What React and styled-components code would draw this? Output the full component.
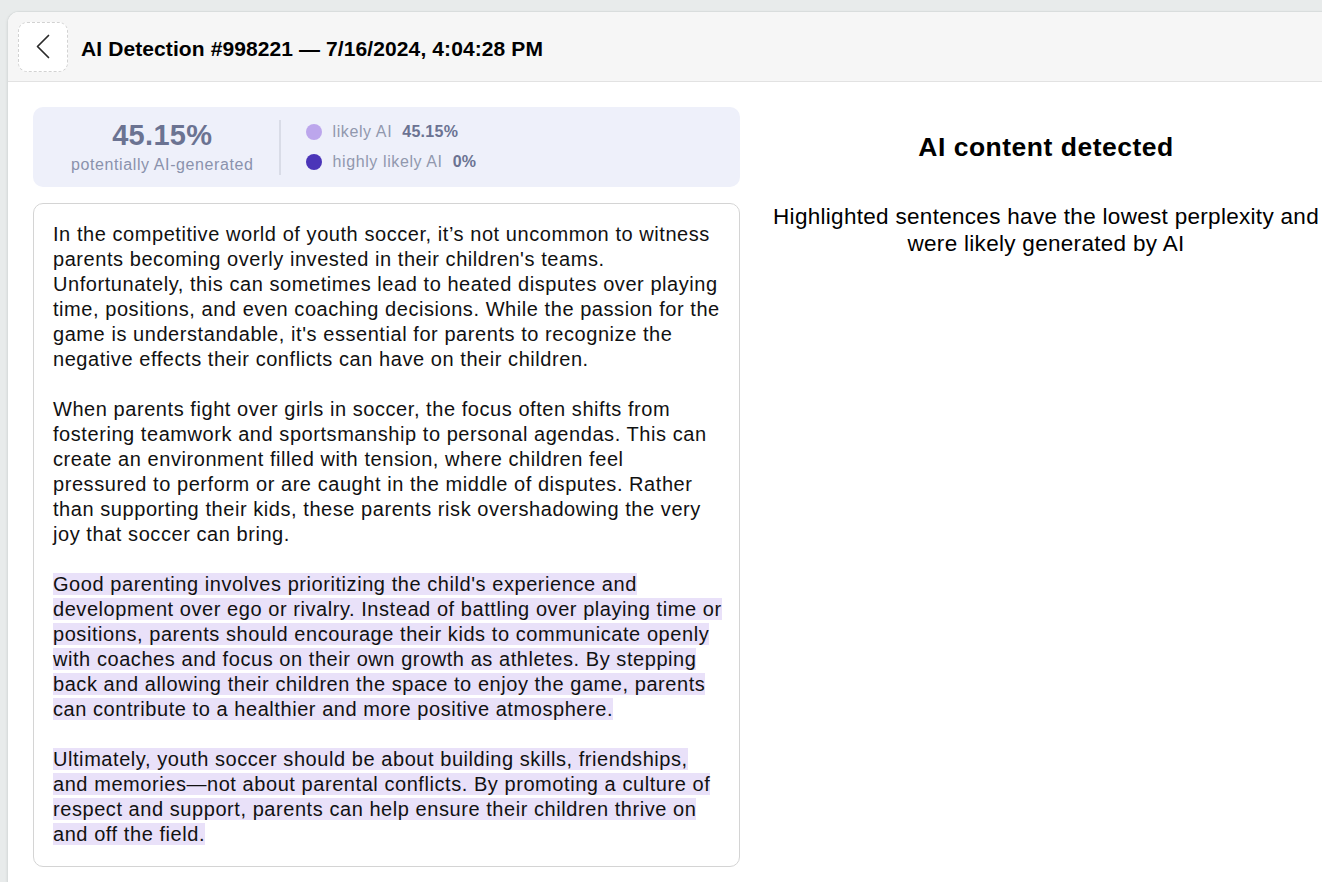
import React from "react";
import styled, { createGlobalStyle } from "styled-components";

const GlobalStyle = createGlobalStyle`
  html, body {
    margin: 0;
    padding: 0;
    background: #e8ebeb;
    font-family: "Liberation Sans", Arial, sans-serif;
    overflow: hidden;
  }
`;

export const Window = styled.div`
  width: 1352px;
  min-height: 871px;
  margin: 11px 0 0 7px;
  background: #fff;
  border: 1px solid #d9dddd;
  border-right: none;
  border-bottom: none;
  border-radius: 12px 0 0 0;
  box-shadow: 0 1px 3px rgba(0, 0, 0, 0.08);
  overflow: hidden;
`;

export const Header = styled.header`
  display: flex;
  align-items: center;
  gap: 13px;
  height: 70px;
  box-sizing: border-box;
  padding: 0 10px;
  background: #f6f6f6;
  border-bottom: 1px solid #e2e2e2;
`;

export const BackButton = styled.button`
  width: 50px;
  height: 50px;
  display: flex;
  align-items: center;
  justify-content: center;
  background: #fff;
  border: 1px dashed #d2d2d2;
  border-radius: 9px;
  padding: 0;
  cursor: pointer;
`;

export const Title = styled.h1`
  margin: 0;
  padding-top: 5px;
  font-size: 21px;
  letter-spacing: 0.1px;
  font-weight: 700;
  color: #000;
`;

export const Content = styled.main`
  display: grid;
  grid-template-columns: 707px 578px;
  column-gap: 17px;
  align-items: start;
  padding: 25px 25px 0 25px;
`;

export const LeftColumn = styled.section`
  display: flex;
  flex-direction: column;
  gap: 16px;
`;

export const StatsCard = styled.div`
  display: flex;
  align-items: center;
  height: 80px;
  padding: 0 25px 0 38px;
  background: #eef0fa;
  border-radius: 10px;
`;

export const Score = styled.div`
  display: flex;
  flex-direction: column;
  align-items: center;
`;

export const ScoreValue = styled.div`
  font-size: 29px;
  line-height: 32px;
  font-weight: 700;
  letter-spacing: 0.3px;
  color: #6b7392;
`;

export const ScoreLabel = styled.div`
  margin-top: 4px;
  font-size: 16px;
  line-height: 20px;
  letter-spacing: 0.6px;
  color: #8a92ac;
`;

export const Divider = styled.div`
  width: 2px;
  height: 55px;
  margin: 0 25px;
  background: #d9dce7;
`;

export const Legend = styled.div`
  display: flex;
  flex-direction: column;
  gap: 10px;
`;

export const LegendRow = styled.div`
  display: flex;
  align-items: center;
  height: 20px;
  font-size: 16px;
  line-height: 20px;
  letter-spacing: 0.6px;
  color: #9198ae;
`;

export const Dot = styled.span`
  width: 16px;
  height: 16px;
  margin-right: 11px;
  border-radius: 50%;
  background: ${(p) => p.$color};
`;

export const LegendValue = styled.b`
  margin-left: 10px;
  letter-spacing: 0.3px;
  color: #6b7392;
`;

export const TextCard = styled.article`
  padding: 18px 16px 19px 19px;
  border: 1px solid #d4d4d4;
  border-radius: 10px;
  font-size: 20px;
  line-height: 25px;
  letter-spacing: 0.56px;
  color: #111;
`;

export const Paragraph = styled.p`
  margin: 0 0 25px;
  &:last-child {
    margin-bottom: 0;
  }
`;

export const Highlight = styled.span`
  background: #e9e1f9;
`;

export const RightColumn = styled.aside`
  text-align: center;
  color: #000;
`;

export const Verdict = styled.h2`
  margin: 25px 0 0;
  font-size: 26.5px;
  line-height: 30px;
  letter-spacing: 0.5px;
  font-weight: 700;
`;

export const Explanation = styled.p`
  margin: 41px 0 0;
  font-size: 22.5px;
  line-height: 27px;
  letter-spacing: 0.3px;
`;

const ChevronLeft = () => (
  <svg width="14" height="25" viewBox="0 0 14 25" fill="none">
    <polyline
      points="12.5,1.5 1.5,12.5 12.5,23.5"
      stroke="#2a2a2a"
      strokeWidth="1.7"
      strokeLinecap="round"
      strokeLinejoin="round"
    />
  </svg>
);

const paragraphs = [
  {
    ai: false,
    text: "In the competitive world of youth soccer, it’s not uncommon to witness parents becoming overly invested in their children's teams. Unfortunately, this can sometimes lead to heated disputes over playing time, positions, and even coaching decisions. While the passion for the game is understandable, it's essential for parents to recognize the negative effects their conflicts can have on their children.",
  },
  {
    ai: false,
    text: "When parents fight over girls in soccer, the focus often shifts from fostering teamwork and sportsmanship to personal agendas. This can create an environment filled with tension, where children feel pressured to perform or are caught in the middle of disputes. Rather than supporting their kids, these parents risk overshadowing the very joy that soccer can bring.",
  },
  {
    ai: true,
    text: "Good parenting involves prioritizing the child's experience and development over ego or rivalry. Instead of battling over playing time or positions, parents should encourage their kids to communicate openly with coaches and focus on their own growth as athletes. By stepping back and allowing their children the space to enjoy the game, parents can contribute to a healthier and more positive atmosphere.",
  },
  {
    ai: true,
    text: "Ultimately, youth soccer should be about building skills, friendships, and memories—not about parental conflicts. By promoting a culture of respect and support, parents can help ensure their children thrive on and off the field.",
  },
];

function App() {
  return (
    <>
      <GlobalStyle />
      <Window>
        <Header>
          <BackButton aria-label="Back">
            <ChevronLeft />
          </BackButton>
          <Title>AI Detection #998221 — 7/16/2024, 4:04:28 PM</Title>
        </Header>
        <Content>
          <LeftColumn>
            <StatsCard>
              <Score>
                <ScoreValue>45.15%</ScoreValue>
                <ScoreLabel>potentially AI-generated</ScoreLabel>
              </Score>
              <Divider />
              <Legend>
                <LegendRow>
                  <Dot $color="#bca6ec" />
                  likely AI
                  <LegendValue>45.15%</LegendValue>
                </LegendRow>
                <LegendRow>
                  <Dot $color="#4b35b8" />
                  highly likely AI
                  <LegendValue>0%</LegendValue>
                </LegendRow>
              </Legend>
            </StatsCard>
            <TextCard>
              {paragraphs.map((p, i) => (
                <Paragraph key={i}>
                  {p.ai ? <Highlight>{p.text}</Highlight> : p.text}
                </Paragraph>
              ))}
            </TextCard>
          </LeftColumn>
          <RightColumn>
            <Verdict>AI content detected</Verdict>
            <Explanation>
              Highlighted sentences have the lowest perplexity and were likely
              generated by AI
            </Explanation>
          </RightColumn>
        </Content>
      </Window>
    </>
  );
}

export default App;
